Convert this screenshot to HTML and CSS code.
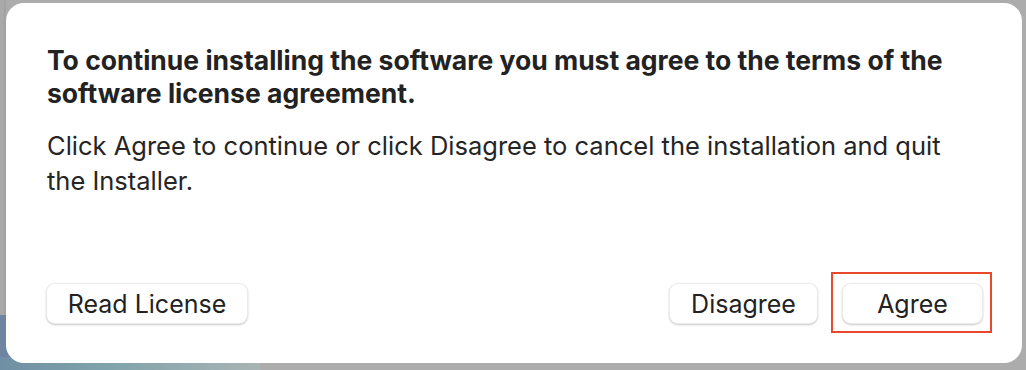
FILE: index.html
```html
<!DOCTYPE html>
<html>
<head>
<meta charset="utf-8">
<link rel="stylesheet" href="styles.css">
</head>
<body>
<div class="backdrop">
  <div class="blur blur-blue"></div>
  <div class="blur blur-teal"></div>
  <div class="dialog">
    <div class="content">
      <p class="title">To continue installing the software you must agree to the terms of the software license agreement.</p>
      <p class="message">Click Agree to continue or click Disagree to cancel the installation and quit the Installer.</p>
    </div>
    <div class="actions">
      <button class="btn btn-read">Read License</button>
      <div class="right">
        <button class="btn btn-disagree">Disagree</button>
        <div class="highlight-wrap">
          <button class="btn btn-agree">Agree</button>
          <span class="highlight"></span>
        </div>
      </div>
    </div>
  </div>
</div>
</body>
</html>
```

FILE: styles.css
```css
html, body {
  margin: 0;
  padding: 0;
  width: 1026px;
  height: 370px;
  overflow: hidden;
  background: #ababab;
}
.backdrop {
  position: relative;
  width: 1026px;
  height: 370px;
  padding: 3px 4px 7px 6px;
  box-sizing: border-box;
  background: linear-gradient(90deg, #a9a9a9 0, #a9a9a9 4px, #9a9a9a 5px, #acacac 6px);
}
.blur {
  position: absolute;
}
.blur-blue {
  left: 0;
  top: 315px;
  width: 120px;
  height: 55px;
  background: #6e84a0;
}
.blur-teal {
  left: 0;
  top: 357px;
  width: 260px;
  height: 13px;
  background: linear-gradient(90deg, #6f8fa4, #7fa3ab 40%, #a9b4b4 100%);
}
.dialog {
  position: relative;
  width: 1016px;
  height: 360px;
  background: #ffffff;
  border-radius: 18px;
  box-sizing: border-box;
  padding: 41px 39px 39px 40px;
  display: flex;
  flex-direction: column;
  justify-content: space-between;
  font-family: Inter, "Noto Sans", sans-serif;
  color: #252525;
}
.content {
  padding-left: 1px;
}
.title {
  margin: 0;
  font-size: 26.5px;
  font-weight: 700;
  line-height: 33px;
  color: #222;
}
.message {
  margin: 18px 0 0 0;
  font-size: 25.5px;
  font-weight: 400;
  line-height: 35px;
}
.actions {
  display: flex;
  justify-content: space-between;
  align-items: flex-end;
}
.right {
  display: flex;
  gap: 24px;
}
.btn {
  height: 41px;
  background: #ffffff;
  border: 1px solid rgba(0,0,0,0.08);
  border-radius: 9px;
  box-shadow: 0 1px 2px rgba(0,0,0,0.22);
  font-family: Inter, "Noto Sans", sans-serif;
  font-size: 25px;
  color: #222;
  padding: 0;
  box-sizing: border-box;
}
.btn-read { width: 202px; }
.btn-disagree { width: 149px; }
.btn-agree { width: 141px; }
.highlight-wrap {
  position: relative;
  display: flex;
}
.highlight {
  position: absolute;
  left: -11px;
  top: -11px;
  right: -9px;
  bottom: -9px;
  border: 2px solid #e8482c;
}
```
